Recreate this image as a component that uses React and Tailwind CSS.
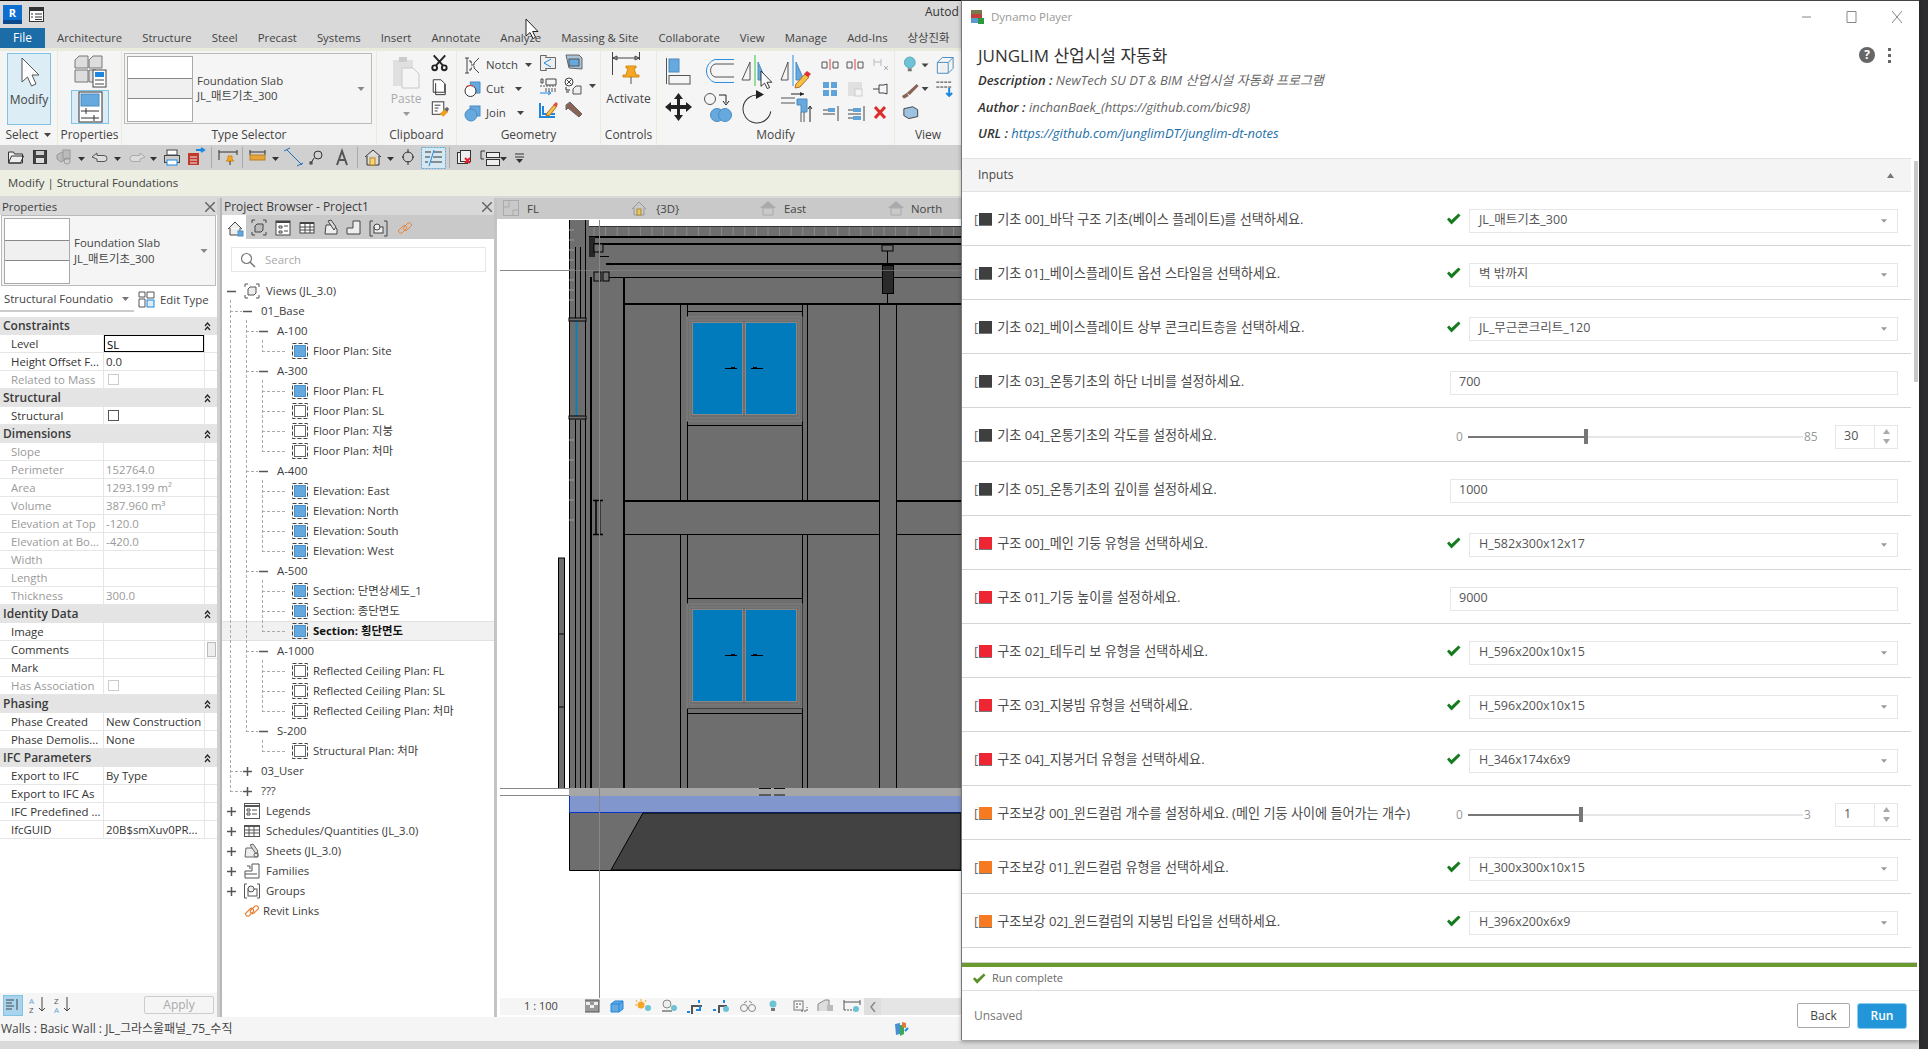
import React from "react";

const Caret = ({ c = "#444", s = 7 }) => (
  <svg width={s} height={4} viewBox="0 0 7 4" className="shrink-0"><path d="M0 0h7L3.5 4z" fill={c} /></svg>
);

/* ---------- ribbon drawings ---------- */
const Cursor = ({ x, y, s = 1 }) => (
  <path transform={`translate(${x} ${y}) scale(${s})`} d="M0 0v17l4-3.5 3 6 2.6-1.2-3-5.8H12z" fill="#fff" stroke="#222" strokeWidth="1" />
);

const PropsIcons = () => (
  <svg width="63" height="78" viewBox="58 51 63 78">
    <g fill="#ddd" stroke="#777">
      <path d="M75 60l4-4h9v12H75z" /><path d="M89 60l4-4h9v12H89z" />
      <path d="M75 70h13v12H75z" /><path d="M89 70h7v12h-7z" />
    </g>
    <rect x="93" y="70" width="13" height="17" fill="#fff" stroke="#444" />
    <rect x="95" y="72" width="9" height="5" fill="#1b87e0" />
    <path d="M95 80h9M95 84h9" stroke="#444" />
    <rect x="71.5" y="90.5" width="37" height="33" fill="#dcedf5" stroke="#7fc4e4" />
    <rect x="79" y="92" width="23" height="30" fill="#fff" stroke="#333" />
    <rect x="81" y="94" width="18" height="12" fill="#65a9de" stroke="#4c8cc0" />
    <path d="M81 111h18M81 118h18M86 108v6M94 115v6" stroke="#333" />
  </svg>
);

const ClipIcons = () => (
  <svg width="30" height="70" viewBox="429 54 30 70">
    <g transform="translate(434 57)" stroke="#222" strokeWidth="2" fill="none">
      <path d="M2 0l10 11M14 0L4 11" /><circle cx="3" cy="13" r="2.5" /><circle cx="13" cy="13" r="2.5" />
    </g>
    <path d="M435.5 82.5h8l4 4v9h-12z" fill="#fff" stroke="#333" />
    <path d="M438 86v12h10V87" fill="none" stroke="#333" />
    <rect x="434.5" y="105.5" width="12" height="13" fill="#fff" stroke="#333" />
    <path d="M437 109h6M437 112h4M437 115h3" stroke="#333" />
    <path d="M442 118l6-5 3 3-5 5z" fill="#f0a020" />
    <path d="M447 113l3-2 2 2-2 3z" fill="#666" />
  </svg>
);

const GeoSmall = ({ k }) => (
  <svg width="17" height="17" viewBox="0 0 17 17" className="shrink-0">
    {k === "n" && <g fill="none" stroke="#444"><path d="M1 1h4M3 1v15M1 16h4M5 4h2v2h1M5 13h2v-2h1" /><path d="M15 1l-5 5v2h-3M15 16l-5-5V9" /></g>}
    {k === "c" && <g><path d="M6 1h10v11H9z" fill="#65a9de" stroke="#4c8cc0" /><circle cx="6.5" cy="10" r="5.5" fill="#fff" stroke="#333" /><path d="M2 6a5.5 5.5 0 0 1 8 0" fill="none" stroke="#e0503a" /></g>}
    {k === "j" && <g><rect x="6" y="1" width="10" height="10" fill="#65a9de" stroke="#4c8cc0" /><circle cx="7" cy="10" r="6" fill="#65a9de" stroke="#4c8cc0" /></g>}
  </svg>
);

const GeoIcons = () => (
  <svg width="60" height="72" viewBox="538 54 60 72">
    <path d="M540.5 58.5h6l-1 2h10v11h-10l1 2h-6z" fill="#eee" stroke="#666" />
    <path d="M551 62l-7 4 7 4" fill="none" stroke="#1b87e0" />
    <path d="M566 58h13l3 3v11l-13-1z" fill="#a8c3d8" stroke="#666" />
    <rect x="569" y="62" width="10" height="7" fill="#65a9de" stroke="#555" />
    <path d="M541 82h2v4h-2zM546 82h10v6h-10z" fill="none" stroke="#444" />
    <path d="M540 89h16M545 92h11M545 94h11" stroke="#555" strokeDasharray="2 1" />
    <path d="M540 96h10M548 94l3 2-3 2" stroke="#1b87e0" fill="none" />
    <circle cx="569" cy="85" r="4" fill="#fff" stroke="#444" /><path d="M566.5 82.5l5 5M571.5 82.5l-5 5" stroke="#444" />
    <path d="M573 92l3-3h5v8h-8z" fill="#eee" stroke="#555" /><path d="M566 90v3h4M566 95h3" stroke="#333" fill="none" />
    <path d="M589 87h7l-3.500 4z" fill="#444" />
    <path d="M540 106v14h15M543 109v8h12" fill="none" stroke="#1b87e0" strokeWidth="2" />
    <path d="M547 116l8-9 2 2-7 9-4 1z" fill="#f5c242" stroke="#b46a2a" /><path d="M553 108l3-3 2 2-2 3z" fill="#e0503a" />
    <path d="M566 108l4-3 12 12-3 3-11-9-2 2z" fill="#8a6355" stroke="#666" />
  </svg>
);

const ActivateIcon = () => (
  <svg width="40" height="34" viewBox="610 55 40 34">
    <path d="M613.500 56v23M640.500 56v8M614 62h26M614 62l4-2v4zM640 62l-4-2v4z" stroke="#444" fill="none" />
    <path d="M634 70h10v2h-2l2 7h3v2h-16v-2h3l2-7h-2z" fill="#f5a623" stroke="#d68a10" transform="translate(-7 0)" />
    <path d="M632 81v7" stroke="#555" />
  </svg>
);

const ModifyIcons = () => (
  <svg width="237" height="78" viewBox="657 51 237 78">
    <g stroke="#555" fill="none">
      <path d="M666.500 58v26" /><rect x="669" y="59" width="10" height="13" fill="#65a9de" stroke="#4c8cc0" /><rect x="669" y="75.500" width="21" height="8.500" />
      <path d="M734 59.500h-19a12 12 0 0 0 0 23h19" stroke="#2a8fe0" /><path d="M734 64h-19a7 7 0 0 0 0 13h19" />
      <path d="M742 80l8-18v18z" /><path d="M755 55v31" stroke="#36c436" />
      <path d="M758 62v18h8z" fill="#65a9de" stroke="#4c8cc0" />
      <path d="M781 80l7-18v18z" /><path d="M793 55v31" stroke="#2a8fe0" />
      <path d="M796 62v18h8z" fill="#65a9de" stroke="#4c8cc0" />
    </g>
    <path d="M796 84l9-10 4 3-9 10-5 1z" fill="#f5c242" stroke="#b46a2a" /><path d="M804 74l3-3 4 3-3 3z" fill="#e0303a" />
    <path d="M678.500 93l4.500 6h-3v6h6v-3l6 5-6 5v-3h-6v6h3l-4.500 6-4.500-6h3v-6h-6v3l-6-5 6-5v3h6v-6h-3z" fill="#222" />
    <circle cx="710" cy="99" r="5.500" fill="none" stroke="#555" /><path d="M719 95h7v8M723 101l3 4 3-4" fill="none" stroke="#222" />
    <circle cx="717" cy="115" r="6.500" fill="#65a9de" stroke="#4c8cc0" /><circle cx="725" cy="115" r="6.500" fill="#65a9de" stroke="#4c8cc0" />
    <path d="M757 95a14 14 0 1 0 14 14" transform="rotate(10 757 109)" fill="none" stroke="#333" />
    <path d="M756 90l8 4.500-8 4.500z" fill="#222" />
    <path d="M781 98h14M781 103h14" stroke="#555" /><path d="M791 94h13" stroke="#222" /><path d="M800 92l4 2-4 2z" fill="#222" />
    <path d="M797 99h10v13h-6v-7h-4z" fill="#65a9de" stroke="#4c8cc0" /><path d="M801 112v10M804 112v10" stroke="#555" /><path d="M810 122v-15M808 109l2-3 2 3" stroke="#222" fill="none" />
    <g>
      <path d="M822 62h5v6h-5zM833 62h5v6h-5z" fill="none" stroke="#555" /><path d="M830 59v11" stroke="#e0403a" />
      <path d="M847 62h5v6h-5zM858 62h5v6h-5z" fill="none" stroke="#555" /><path d="M855 59v11" stroke="#e0403a" />
      <path d="M874 62h7M874 59v7M881 59v7" stroke="#bbb" fill="none" /><path d="M884 66l4 4M888 66l-4 4" stroke="#aaa" />
      <g fill="#5fa3d9"><rect x="823" y="82" width="6" height="6" /><rect x="831" y="82" width="6" height="6" /><rect x="823" y="90" width="6" height="6" /><rect x="831" y="90" width="6" height="6" /></g>
      <rect x="848" y="82" width="14" height="14" fill="#e0e0e0" /><rect x="855" y="89" width="7" height="7" fill="#f5f5f5" stroke="#ccc" />
      <path d="M873 89h6M879 85h5l3-1v10l-3-1h-5z" fill="none" stroke="#444" />
      <path d="M823 110h12M823 114h12M838 106v15" stroke="#444" /><path d="M828 108h7v4h-7z" fill="#5fa3d9" />
      <path d="M848 110h13M848 114h13M848 118h13M864 106v15" stroke="#444" /><path d="M853 108h8v4h-8zM853 116h8v4h-8z" fill="#5fa3d9" />
      <path d="M875 107l10 11M885 107l-10 11" stroke="#e02a2a" strokeWidth="3" />
    </g>
  </svg>
);

const ViewIcons = () => (
  <svg width="67" height="78" viewBox="895 51 67 78">
    <circle cx="910" cy="62" r="5.500" fill="#6cc3d5" stroke="#5ea8b8" /><rect x="908" y="68" width="4" height="3" fill="#777" />
    <path d="M922 63h7l-3.500 4z" fill="#444" />
    <path d="M938 62h11v11h-11zM938 62l5-5h11v11l-5 5M949 62l5-5" fill="none" stroke="#4a8ec4" />
    <rect x="941" y="64" width="6" height="7" fill="#eee" />
    <path d="M902 96l5-3 2 3-5 3zM907 93l10-9 2 2-9 9z" fill="#8a6355" /><path d="M922 87h7l-3.500 4z" fill="#444" />
    <path d="M937 82h15M937 87h15" stroke="#333" strokeDasharray="3 1" /><path d="M950 88v7M947 93l3 3 3-3" stroke="#1b87e0" fill="none" strokeWidth="2" />
    <path d="M904 109l9-2 5 3v7l-9 2-5-3z" fill="#9ec3e0" stroke="#444" />
  </svg>
);

const Qat = () => (
  <svg width="540" height="25" viewBox="0 145 540 25" className="block">
    <g fill="none" stroke="#333">
      <path d="M8.500 163v-11h5l1 2h8v9zM8.500 163l3-7h12l-3 7z" fill="#eee" />
      <rect x="33.500" y="150.500" width="13" height="13" fill="#444" /><rect x="36" y="151" width="8" height="4" fill="#ccc" stroke="none" /><rect x="36" y="158" width="8" height="5" fill="#ddd" stroke="none" />
      <g stroke="#999" fill="#bbb"><path d="M57 155l5-3 4 3v4l-5 3-4-3z" /><rect x="63" y="150" width="7" height="9" /><circle cx="67" cy="161" r="3" fill="none" /></g>
      <path d="M92 157l5-4v2.500h7a3 3 0 0 1 0 6h-7V159z" fill="#ddd" stroke="#555" />
      <path d="M145 157l-5-4v2.500h-7a3 3 0 0 0 0 6h7V159z" fill="#ddd" stroke="#aaa" />
      <rect x="164.500" y="155.500" width="15" height="7" fill="#ccc" stroke="#444" /><rect x="167" y="150" width="10" height="5" fill="#fff" stroke="#444" /><rect x="167" y="160" width="10" height="5" fill="#fff" stroke="#1b87e0" />
      <rect x="188" y="153" width="11" height="12" fill="#c0392b" stroke="none" /><path d="M190 157h7M190 160h7M190 163h7" stroke="#eee" /><path d="M196 150h6M201 148l3 2-3 2" stroke="#1b87e0" strokeWidth="2" />
      <path d="M219 150v10M237 150v5M219 152h18" stroke="#333" />
      <path d="M228 156h4v3l2 2h-8l2-2z" fill="#f5a623" stroke="#d68a10" /><path d="M230 161v4" />
      <path d="M250 150v5M265 150v5M250 152h15" /><rect x="250" y="155" width="15" height="5" fill="#e6a53a" stroke="#b98020" />
      <path d="M287 150l15 15M284 151l6-3M297 166l6-3" stroke="#1f6fb8" />
      <circle cx="318" cy="155" r="4" /><path d="M314 158l-3 5" /><rect x="310" y="162" width="2" height="2" />
      <path d="M337 165l5-14 5 14M339 160h6" stroke="#555" strokeWidth="2" />
      <path d="M365 157l8-7 8 7M367 156v9h12v-9" fill="#ddd" /><rect x="370" y="158" width="5" height="7" fill="#f5d76e" stroke="#b98020" />
      <circle cx="408" cy="157" r="5" /><path d="M408 149v4M408 161v4" /><path d="M402 157h2M412 157h2" />
      <rect x="421.500" y="147.500" width="24" height="21" fill="#d5e8f2" stroke="#5fa8d8" strokeDasharray="2 1" />
      <path d="M425 152h6M434 152h8M425 157h5M433 157h9M425 162h3M431 162h11" /><path d="M434 150l-5 16" stroke="#1b87e0" />
      <rect x="457.500" y="152.500" width="10" height="11" fill="#eee" /><rect x="460.500" y="150.500" width="10" height="11" fill="#eee" /><path d="M465 158l5 5M470 158l-5 5" stroke="#e0202a" strokeWidth="2" />
      <rect x="486.500" y="159.500" width="13" height="6" fill="#eee" /><rect x="486.500" y="152.500" width="13" height="5" fill="#eee" /><path d="M481 151h4M481 151v8M481 159h3" />
      <path d="M515 154h9M515 157h9" stroke="#333" />
    </g>
    <g fill="#333">
      <path d="M78 157h7l-3.500 4zM114 157h7l-3.500 4zM150 157h7l-3.500 4z" />
      <path d="M272 157h7l-3.500 4zM387 157h7l-3.500 4zM500 157h7l-3.500 4zM516 159h7l-3.500 4z" />
    </g>
    <path d="M211.500 147v21M242.500 147v21M357.500 147v21M449.500 147v21" stroke="#aaa" />
  </svg>
);

/* ---------- properties ---------- */
const rows = [
  ["s", "Constraints"],
  ["e", "Level", "SL"],
  ["r", "Height Offset F...", "0.0"],
  ["d", "Related to Mass", "☐"],
  ["s", "Structural"],
  ["r", "Structural", "☑"],
  ["s", "Dimensions"],
  ["d", "Slope", ""],
  ["d", "Perimeter", "152764.0"],
  ["d", "Area", "1293.199 m²"],
  ["d", "Volume", "387.960 m³"],
  ["d", "Elevation at Top", "-120.0"],
  ["d", "Elevation at Bo...", "-420.0"],
  ["d", "Width", ""],
  ["d", "Length", ""],
  ["d", "Thickness", "300.0"],
  ["s", "Identity Data"],
  ["r", "Image", ""],
  ["c", "Comments", ""],
  ["r", "Mark", ""],
  ["d", "Has Association", "☐"],
  ["s", "Phasing"],
  ["r", "Phase Created", "New Construction"],
  ["r", "Phase Demolis...", "None"],
  ["s", "IFC Parameters"],
  ["r", "Export to IFC", "By Type"],
  ["r", "Export to IFC As", ""],
  ["r", "IFC Predefined ...", ""],
  ["r", "IfcGUID", "20B$smXuv0PR..."],
];

const Thumb = () => (
  <div className="w-[66px] h-[66px] bg-white border border-[#aaa] flex flex-col justify-center shrink-0">
    <div className="h-[21px] bg-[#f0f0f0] border-y border-[#888]" />
  </div>
);

const Chev = () => (
  <svg width="7" height="9" viewBox="0 0 7 9"><path d="M1 4l2.500-3L6 4M1 8l2.500-3L6 8" fill="none" stroke="#222" strokeWidth="1.200" /></svg>
);

const PropRow = ({ r }) => {
  const [k, n, v] = r;
  if (k === "s")
    return (
      <div className="h-[18px] bg-[#e4e4e4] flex items-center justify-between pl-[3px] pr-[6px] font-semibold text-[12px] text-[#3a3a3a]">
        <span>{n}</span><Chev />
      </div>
    );
  const dis = k === "d";
  const isBox = v === "☐" || v === "☑";
  return (
    <div className={`h-[18px] flex border-b border-[#e6e6e6] text-[11.4px] leading-[17px] ${dis ? "text-[#9a9a9a]" : "text-[#333]"}`}>
      <div className="w-[103px] pl-[11px] whitespace-nowrap">{n}</div>
      <div className="w-[101px] border-l border-[#e6e6e6] pl-[2px] whitespace-nowrap relative flex items-center">
        {isBox && <span className={`ml-[2px] w-[11px] h-[11px] border ${dis ? "border-[#ccc]" : "border-[#555]"}`} />}
        {!isBox && k === "e" && <span className="w-[100px] h-[17px] -ml-[2px] pl-[2px] border border-black text-black bg-white">{v}</span>}
        {!isBox && k !== "e" && v}
      </div>
      <div className="flex-1 border-l border-[#e6e6e6] flex items-center justify-center">
        {k === "c" && <span className="w-[9px] h-[15px] bg-[#eee] border border-[#bbb]" />}
      </div>
    </div>
  );
};

/* ---------- project browser ---------- */
const tree = [
  ["0m", "Views (JL_3.0)", "views"],
  ["1m", "01_Base"],
  ["2m", "A-100"],
  ["l", "Floor Plan: Site", "b"],
  ["2m", "A-300"],
  ["l", "Floor Plan: FL", "b"],
  ["l", "Floor Plan: SL", "w"],
  ["l", "Floor Plan: 지붕", "w"],
  ["l", "Floor Plan: 처마", "w"],
  ["2m", "A-400"],
  ["l", "Elevation: East", "b"],
  ["l", "Elevation: North", "b"],
  ["l", "Elevation: South", "b"],
  ["l", "Elevation: West", "b"],
  ["2m", "A-500"],
  ["l", "Section: 단면상세도_1", "b"],
  ["l", "Section: 종단면도", "b"],
  ["L", "Section: 횡단면도", "b"],
  ["2m", "A-1000"],
  ["l", "Reflected Ceiling Plan: FL", "w"],
  ["l", "Reflected Ceiling Plan: SL", "w"],
  ["l", "Reflected Ceiling Plan: 처마", "w"],
  ["2m", "S-200"],
  ["l", "Structural Plan: 처마", "w"],
  ["1p", "03_User"],
  ["1p", "???"],
  ["0p", "Legends", "legend"],
  ["0p", "Schedules/Quantities (JL_3.0)", "sched"],
  ["0p", "Sheets (JL_3.0)", "sheet"],
  ["0p", "Families", "fam"],
  ["0p", "Groups", "group"],
  ["0n", "Revit Links", "link"],
];

const Tog = ({ plus }) => (
  <svg width="9" height="9" viewBox="0 0 9 9" className="shrink-0">
    <path d={plus ? "M0 4.500h9M4.500 0v9" : "M0 4.500h9"} stroke="#555" strokeWidth="1.500" />
  </svg>
);

const ViewBox = ({ c }) => (
  <svg width="16" height="16" viewBox="0 0 16 16" className="shrink-0">
    <rect x="0.500" y="0.500" width="15" height="15" fill="none" stroke="#444" strokeDasharray="4 2" />
    <rect x="2.500" y="2.500" width="11" height="11" fill={c === "b" ? "#63a9e0" : "#fff"} stroke={c === "b" ? "#4f90c4" : "#666"} />
  </svg>
);

const TreeIcon = ({ k }) => (
  <svg width="16" height="16" viewBox="0 0 16 16" className="shrink-0">
    {k === "views" && <g fill="none" stroke="#555"><path d="M1 4V1h3M12 1h3v3M15 12v3h-3M4 15H1v-3" /><path d="M4 6l2-2h6v6l-2 2H4z" fill="#eee" /></g>}
    {k === "legend" && <g fill="none" stroke="#555"><rect x="0.500" y="0.500" width="15" height="15" fill="#fff" /><path d="M0 3h16" strokeWidth="2" /><path d="M3 6h3v2H3zM3 10h3v2H3zM8 7h5M8 11h5" /></g>}
    {k === "sched" && <g fill="none" stroke="#555"><rect x="0.500" y="2.500" width="15" height="11" /><path d="M0 3h16" strokeWidth="2" /><path d="M1 7h14M1 10h14M5 3v10M10 3v10" /></g>}
    {k === "sheet" && <g fill="none" stroke="#666"><path d="M1 14l1-9h7l5 5v4z" fill="#eee" /><path d="M6 2l3-1 5 7-2 3z" fill="#ddd" /><circle cx="12" cy="12" r="2" /></g>}
    {k === "fam" && <g fill="none" stroke="#555"><path d="M1 8h7V1h7v14H1z" /><path d="M3 3h3v3M1 11h12" /></g>}
    {k === "group" && <g fill="none" stroke="#555"><path d="M3 1H0.500v14H3M13 1h2.500v14H13" /><rect x="4" y="6" width="9" height="7" /><circle cx="7" cy="6" r="3" fill="#eee" /></g>}
    {k === "link" && <g fill="none" stroke="#e5853a" strokeWidth="1.200"><path d="M1 11l5-5a2 2 0 0 1 3 3l-4 4a2.500 2.500 0 0 1-3.500-2" /><path d="M15 5l-5 5a2 2 0 0 1-3-3l4-4a2.500 2.500 0 0 1 3.500 2" /></g>}
  </svg>
);

const TreeRow = ({ t }) => {
  const [k, label, ic] = t;
  if (k === "l" || k === "L")
    return (
      <div className={`h-5 flex items-center pl-[70px] ${k === "L" ? "bg-[#f1f1f1] border-y border-[#e2e2e2] font-bold text-[#111]" : ""}`}>
        <ViewBox c={ic} /><span className="ml-[5px]">{label}</span>
      </div>
    );
  if (k === "1m" || k === "1p")
    return <div className="h-5 flex items-center pl-[21px]"><Tog plus={k === "1p"} /><span className="ml-[9px]">{label}</span></div>;
  if (k === "2m")
    return <div className="h-5 flex items-center pl-[37px]"><Tog /><span className="ml-[9px]">{label}</span></div>;
  if (k === "0n")
    return <div className="h-5 flex items-center pl-[22px]"><TreeIcon k={ic} /><span className="ml-[3px]">{label}</span></div>;
  return (
    <div className="h-5 flex items-center pl-[5px]">
      <Tog plus={k === "0p"} /><span className="w-[8px]" /><TreeIcon k={ic} /><span className="ml-[6px]">{label}</span>
    </div>
  );
};

const TreeLines = () => {
  const v = [[231, 300, 791], [247, 320, 731], [263, 340, 351], [263, 380, 451], [263, 480, 551], [263, 580, 631], [263, 660, 711], [263, 740, 751]];
  const h = [[231, 243, [311, 771, 791]], [247, 259, [331, 371, 471, 571, 651, 731]], [263, 288, [351, 391, 411, 431, 451, 491, 511, 531, 551, 591, 611, 631, 671, 691, 711, 751]]];
  return (
    <svg className="absolute left-0 top-0 pointer-events-none" width="271" height="640" viewBox="223 281 271 640">
      <g stroke="#aaa" strokeDasharray="3 2" fill="none">
        {v.map(([x, a, b], i) => <path key={i} d={`M${x + 0.5} ${a}V${b + 0.5}`} />)}
        {h.map(([a, b, ys], i) => ys.map((y) => <path key={`${i}-${y}`} d={`M${a} ${y + 0.5}H${b}`} />))}
      </g>
    </svg>
  );
};

const BrowserTools = () => (
  <svg width="271" height="24" viewBox="223 215 271 24" className="block">
    <rect x="223" y="215" width="24" height="24" fill="#fff" />
    <g fill="none" stroke="#444">
      <path d="M229 229l7-7 7 7M231 228v7h10v-7" fill="#eee" />
      <rect x="239" y="231" width="5" height="5" fill="#63a9e0" stroke="#4f90c4" />
      <path d="M253 223v-3h3M264 220h3v3M267 232v3h-3M256 235h-3v-3" /><path d="M256 226l2-2h6v6l-2 2h-6z" fill="#bbb" />
      <rect x="277" y="221" width="14" height="14" fill="#fff" /><path d="M277 222h14" strokeWidth="2" /><path d="M280 226h3v2h-3zM280 231h3v2h-3zM285 226h4M285 231h4" />
      <rect x="301" y="223" width="14" height="10" fill="#fff" /><path d="M301 223h14" strokeWidth="2" /><path d="M301 227h14M301 230h14M306 223v10M311 223v10" />
      <path d="M326 234l1-9h7l4 4v5z" fill="#eee" /><path d="M329 221l3-1 5 7-2 3z" fill="#ddd" />
      <path d="M348 228h6v-7h7v13h-13z" fill="#eee" />
      <path d="M374 221h-3v15h3M385 221h3v15h-3" /><rect x="375" y="227" width="9" height="6" fill="#eee" /><circle cx="378" cy="227" r="3" fill="#eee" />
    </g>
    <g fill="none" stroke="#e5853a"><path d="M399 231l5-5a2 2 0 0 1 3 3l-4 4a2.500 2.500 0 0 1-3.500-2" /><path d="M413 225l-5 5a2 2 0 0 1-3-3l4-4a2.500 2.500 0 0 1 3.500 2" /></g>
  </svg>
);

/* ---------- canvas ---------- */
const Win = ({ y }) => (
  <g>
    <rect x="687" y={y} width="115" height="104" fill="#6e6e6e" stroke="#7f7f7f" />
    <rect x="690" y={y + 3} width="109" height="98" fill="none" stroke="#7f7f7f" />
    <rect x="692.500" y={y + 5.500} width="50" height="92" fill="#027bbd" stroke="#888" />
    <rect x="745.500" y={y + 5.500} width="51" height="92" fill="#027bbd" stroke="#888" />
    <path d={`M725 ${y + 51.500}h12M751 ${y + 51.500}h12`} stroke="#000" />
    <path d={`M731 ${y + 50.500}h4M753 ${y + 50.500}h4`} stroke="#000" />
  </g>
);

const Model = () => {
  const ticks = [];
  for (let x = 594; x < 961; x += 11.600) ticks.push(x);
  return (
    <svg width="464" height="779" viewBox="497 219 464 779" className="block shrink-0">
      <rect x="497" y="219" width="464" height="779" fill="#fff" />
      <rect x="569" y="220" width="20" height="568" fill="#6e6e6e" />
      <rect x="589" y="226" width="372" height="562" fill="#6e6e6e" />
      <rect x="558" y="558" width="7" height="230" fill="#6e6e6e" />
      <rect x="575.500" y="320" width="2" height="96" fill="#0a80b8" />
      <g stroke="#000" fill="none">
        <path d="M558.500 558v230M564.500 558v230M558 558h7M558 634h7M558 707h7" />
        <path d="M569.500 220v650M575.500 247v73M575.500 420v368M580.500 247v73M580.500 420v368M585.500 220v568" />
        <path d="M591 277v511" strokeWidth="2" /><path d="M624 278v510" strokeWidth="2" />
        <path d="M589 226.500h372" stroke="#333" />
        <path d="M589 237h372M589 244h372M606 264h355" strokeWidth="2" />
        <path d="M606 277.500h355M599 256.500h10" />
        <path d="M624 304h337M624 501h255M896 501h65" strokeWidth="2" />
        <path d="M624 534.500h255M896 534.500h65" />
        <path d="M680.500 304v197M687.500 304v197M802.500 304v197M807.500 304v197M680.500 534v254M687.500 534v254M802.500 534v254M807.500 534v254" />
        <path d="M879.500 304v484M896.500 304v484" />
        <path d="M687 311.500h115M687 425.500h115M687 598.500h115M687 708.500h115M687 713.500h115" />
        <path d="M887.500 250v54" />
      </g>
      <g stroke="#8a8a8a" fill="none">{ticks.map((x) => <path key={x} d={`M${x} 227v9`} />)}</g>
      <path d="M569 230h5M569 240h5M569 250h5M569 260h5M569 270h5M569 280h5M569 290h5M569 300h5M569 440h5M569 460h5M569 480h5M569 500h5M569 520h5" stroke="#9a9a9a" />
      <Win y={317} /><Win y={604} />
      <rect x="569" y="318" width="17" height="3" fill="#6e6e6e" stroke="#000" />
      <rect x="569" y="416" width="17" height="3" fill="#6e6e6e" stroke="#000" />
      <rect x="589" y="237" width="6" height="20" fill="#262626" />
      <rect x="594" y="244" width="9" height="8" fill="#6e6e6e" stroke="#000" />
      <rect x="594" y="272" width="7" height="9" fill="#6e6e6e" stroke="#000" />
      <rect x="603" y="272" width="6" height="9" fill="#6e6e6e" stroke="#000" />
      <rect x="882" y="245" width="11" height="6" fill="#6e6e6e" stroke="#000" />
      <rect x="882.500" y="265.500" width="11" height="28" fill="#2a2a2a" stroke="#000" />
      <path d="M593 500.500h10M593 534.500h10M596 501v33" stroke="#000" strokeWidth="1.500" />
      <path d="M600 501v33" stroke="#000" />
      <path d="M500 270.500h69" stroke="#888" /><path d="M569 270.500h392" stroke="#888" opacity="0.600" />
      <rect x="569" y="788" width="392" height="8" fill="#a6a6a6" />
      <rect x="569" y="796" width="392" height="16" fill="#8096cc" />
      <path d="M569 812.500h392M569.500 796v17" stroke="#0a36c8" />
      <path d="M759 788.500h12M774 788.500h11M759 795h12M774 795h11" stroke="#111" />
      <rect x="569" y="813" width="392" height="57" fill="#6e6e6e" />
      <path d="M643 813L611 870H961V813z" fill="#424242" stroke="#000" />
      <path d="M569.500 813v57.500H961" stroke="#000" fill="none" />
      <path d="M500 788.500h69M500 795.500h69" stroke="#888" />
      <path d="M599.500 220v778" stroke="#888" />
    </svg>
  );
};

const TabIcon = ({ k }) => (
  <svg width="16" height="16" viewBox="0 0 16 16" className="shrink-0">
    {k === "p" && <g fill="none" stroke="#aaa"><rect x="0.500" y="0.500" width="15" height="15" /><path d="M6 1v6h-5M10 15v-5h5" /></g>}
    {k === "h" && <g fill="none" stroke="#999"><path d="M1 9l7-7 7 7M3 8v7h10V8" /><rect x="6" y="9" width="4" height="6" fill="#e8c860" stroke="#b08a30" /></g>}
    {k === "e" && <g><path d="M0 8l8-7 8 7z" fill="#aaa" /><path d="M3 8h10v7H3z" fill="none" stroke="#aaa" /></g>}
  </svg>
);

const VBar = () => {
  const b = "#6cc3d5";
  return (
    <svg width="279" height="17" viewBox="585 998 279 17" className="block shrink-0">
      <rect x="583" y="1000" width="16" height="12" fill="#999" stroke="#555" />
      <g fill="#eee"><rect x="586" y="1002" width="4" height="3" /><rect x="594" y="1002" width="4" height="3" /><rect x="590" y="1005" width="4" height="3" /></g>
      <path d="M611 1004l4-3h8v8l-4 3h-8z" fill="#65a9de" stroke="#1b87e0" /><path d="M611 1004h8v8M619 1004l4-3" fill="none" stroke="#1b87e0" />
      <circle cx="641" cy="1005" r="3.500" fill="#f5a623" /><path d="M641 999v2M636 1000l1 2M646 1000l-1 2M635 1005h2" stroke="#f5a623" />
      <circle cx="648" cy="1008" r="3" fill={b} />
      <circle cx="667" cy="1004" r="4" fill="#eee" stroke="#888" /><path d="M662 1011h10" stroke="#999" strokeWidth="2" /><circle cx="674" cy="1008" r="3" fill={b} />
      <path d="M692 1014v-8h10" stroke="#555" strokeWidth="2" fill="none" /><path d="M687 1012h3M696 1010h4v-4M699 1000v3" stroke="#1b87e0" strokeWidth="2" fill="none" />
      <path d="M719 1013v-7h8" stroke="#555" strokeWidth="2" fill="none" /><path d="M713 1010h3M724 1000v3" stroke="#1b87e0" strokeWidth="2" /><circle cx="726" cy="1009" r="3" fill={b} />
      <circle cx="744" cy="1008" r="3.500" fill="none" stroke="#888" /><circle cx="752" cy="1008" r="3.500" fill="none" stroke="#888" /><path d="M744 1003l3-2M752 1003l-3-2" stroke="#888" />
      <circle cx="773" cy="1004" r="3.500" fill={b} /><rect x="771" y="1008" width="4" height="3" fill="#777" />
      <rect x="794" y="1001" width="9" height="9" fill="none" stroke="#777" /><path d="M796 1004h5M796 1007h3M801 1011h6M807 1011v-4" stroke="#555" fill="none" strokeDasharray="2 1" />
      <path d="M818 1011v-7l7-4h4v11" fill="#ddd" stroke="#888" /><rect x="827" y="1005" width="6" height="6" fill="#bbb" />
      <path d="M844 1000v10M860 1000v5M844 1002h16" stroke="#555" fill="none" /><path d="M844 1010h12" stroke="#555" strokeDasharray="2 1" /><circle cx="856" cy="1009" r="3" fill={b} />
    </svg>
  );
};

/* ---------- dynamo ---------- */
const inputs = [
  ["d", "기초 00]_바닥 구조 기초(베이스 플레이트)를 선택하세요.", "s", "JL_매트기초_300"],
  ["d", "기초 01]_베이스플레이트 옵션 스타일을 선택하세요.", "s", "벽 밖까지"],
  ["d", "기초 02]_베이스플레이트 상부 콘크리트층을 선택하세요.", "s", "JL_무근콘크리트_120"],
  ["d", "기초 03]_온통기초의 하단 너비를 설정하세요.", "t", "700"],
  ["d", "기초 04]_온통기초의 각도를 설정하세요.", "r", "30", "85", 34.5],
  ["d", "기초 05]_온통기초의 깊이를 설정하세요.", "t", "1000"],
  ["r", "구조 00]_메인 기둥 유형을 선택하세요.", "s", "H_582x300x12x17"],
  ["r", "구조 01]_기둥 높이를 설정하세요.", "t", "9000"],
  ["r", "구조 02]_테두리 보 유형을 선택하세요.", "s", "H_596x200x10x15"],
  ["r", "구조 03]_지붕빔 유형을 선택하세요.", "s", "H_596x200x10x15"],
  ["r", "구조 04]_지붕거더 유형을 선택하세요.", "s", "H_346x174x6x9"],
  ["o", "구조보강 00]_윈드컬럼 개수를 설정하세요. (메인 기둥 사이에 들어가는 개수)", "r", "1", "3", 33],
  ["o", "구조보강 01]_윈드컬럼 유형을 선택하세요.", "s", "H_300x300x10x15"],
  ["o", "구조보강 02]_윈드컬럼의 지붕빔 타입을 선택하세요.", "s", "H_396x200x6x9"],
];

const Check = ({ c = "#167a1e", s = 15 }) => (
  <svg width={s} height={s * 0.8} viewBox="0 0 15 12" className="shrink-0"><path d="M1 6.500l2-2 2.500 2.500L12.500 0.500 14.500 2.500 5.500 11.500z" fill={c} /></svg>
);

const Field = ({ v, w }) => (
  <div className={`h-[24px] bg-white border border-[#e6e6e6] flex items-center ${w}`}>{v}</div>
);

const InputRow = ({ r }) => {
  const [col, label, type, v, max, pct] = r;
  const sw = col === "d" ? "bg-[#3f3f3f]" : col === "r" ? "bg-[#ee2533]" : "bg-[#f57a21]";
  return (
    <div className="h-[54px] flex items-center border-b border-[#d4d4d4] pl-[12px] pr-[13px] text-[#4a4a4a]">
      <div className="flex items-center mt-[2px] text-[13.1px]">
        <span className="text-[#666]">[</span>
        <span className={`ml-[1px] w-[13px] h-[13px] border-b border-[#777] ${sw}`} />
        <span className="ml-[5px] whitespace-nowrap">{label}</span>
      </div>
      <div className="ml-auto mt-[4px] w-[448px] flex items-center shrink-0 text-[#555] text-[12.5px]">
        {type === "s" && (
          <>
            <div className="w-[23px] -ml-[4px] flex -mt-[4px]"><Check /></div>
            <Field w="flex-1 pl-[9px] pr-[10px] justify-between" v={<><span>{v}</span><Caret c="#999" s={6} /></>} />
          </>
        )}
        {type === "t" && <Field w="flex-1 pl-[8px]" v={<span>{v}</span>} />}
        {type === "r" && (
          <>
            <span className="w-[18px] pl-[6px] text-[#999] text-[12px]">0</span>
            <div className="flex-1 h-[2px] bg-[#e6e6e6] relative flex items-center">
              <div className="h-[2px] bg-[#777]" style={{ width: `${pct}%` }} />
              <div className="w-[4px] h-[15px] bg-[#777]" />
            </div>
            <span className="w-[32px] pl-[1px] text-[#999] text-[12px]">{max}</span>
            <div className="w-[63px] h-[24px] border border-[#e6e6e6] flex items-center">
              <span className="flex-1 pl-[8px]">{v}</span>
              <div className="w-[23px] h-full border-l border-[#e6e6e6] flex flex-col items-center justify-center gap-[5px]">
                <svg width="7" height="5" viewBox="0 0 7 5"><path d="M0 5h7L3.500 0z" fill="#aaa" /></svg>
                <svg width="7" height="5" viewBox="0 0 7 5"><path d="M0 0h7L3.500 5z" fill="#aaa" /></svg>
              </div>
            </div>
          </>
        )}
      </div>
    </div>
  );
};

const Group = ({ w, label, children }) => (
  <div className={`flex flex-col h-full border-r border-[#e9ecdc] shrink-0 ${w}`}>
    <div className="h-[76px] flex">{children}</div>
    <div className="h-[15px] text-center text-[12px] leading-[15px] text-[#444]">{label}</div>
  </div>
);

const GeoRow = ({ k, t, w }) => (
  <div className="h-[24px] flex items-center text-[11.4px] text-[#444]">
    <GeoSmall k={k} />
    <span className="ml-[5px]">{t}</span>
    <span className={`flex ${w}`}><Caret /></span>
  </div>
);

export default function App() {
  const tabs = ["Architecture", "Structure", "Steel", "Precast", "Systems", "Insert", "Annotate", "Analyze", "Massing & Site", "Collaborate", "View", "Manage", "Add-Ins", "상상진화"];
  return (
    <div className="w-[1928px] h-[1049px] flex relative overflow-hidden bg-[#2d2d30] font-['Open_Sans','Noto_Sans_CJK_KR',sans-serif] text-[12px] text-[#3c3c3c]">
      {/* Revit window */}
      <div className="w-[961px] h-full flex flex-col bg-[#d9d9d9] shrink-0 overflow-hidden relative">
        <div className="h-[28px] border-t border-black flex items-center pl-[3px] shrink-0 relative">
          <div className="w-[19px] h-[19px] bg-[#0f6fd0] text-white text-[11px] font-bold flex items-center justify-center border-b-[4px] border-[#0b4a8c] leading-none">R</div>
          <svg width="15" height="15" viewBox="0 0 15 15" className="ml-[7px]">
            <rect x="0.500" y="0.500" width="14" height="14" fill="#fff" stroke="#333" /><path d="M0 2.500h15" stroke="#333" strokeWidth="3" /><path d="M2 7h2M6 7h7M2 10h2M6 10h7M6 12.500h7" stroke="#333" />
          </svg>
          <span className="absolute left-[925px] top-[2px] text-[12px] text-[#333] whitespace-nowrap">Autod</span>
        </div>
        <div className="h-[20px] flex items-center gap-[20px] shrink-0 whitespace-nowrap text-[11.4px] text-[#444]">
          <div className="w-[45px] h-full shrink-0 bg-[#1c6ca8] text-white text-[12px] flex items-center justify-center -mr-[8px]">File</div>
          {tabs.map((t) => <span key={t} className="shrink-0">{t}</span>)}
        </div>
        <div className="h-[97px] shrink-0 border-t-[3px] border-[#e9ecdc] bg-[#f5f5f5] flex">
          <Group w="w-[58px]" label={<span className="flex items-center justify-center gap-[5px] pr-[2px] pl-[1px]">Select <Caret /></span>}>
            <div className="ml-[7px] mt-[2px] w-[44px] h-[72px] bg-[#dcedf5] border border-[#7fc4e4] flex flex-col items-center">
              <svg width="22" height="34" viewBox="0 0 22 34" className="mt-[3px]"><path d="M4 1v24l5.500-5 4 9 4.500-2-4-9h7z" fill="#fff" stroke="#555" /></svg>
              <span className="text-[12px] leading-[16px] text-[#444] mt-[1px]">Modify</span>
            </div>
          </Group>
          <Group w="w-[64px]" label="Properties"><PropsIcons /></Group>
          <Group w="w-[255px]" label="Type Selector">
            <div className="ml-[2px] mt-[2px] w-[248px] h-[71px] border border-[#bbb] flex items-center pl-[2px] pr-[6px]">
              <Thumb />
              <div className="ml-[4px] -mt-[2px] flex-1 leading-[15px] text-[11.4px] text-[#444] whitespace-nowrap">Foundation Slab<br />JL_매트기초_300</div>
              <Caret c="#888" s={8} />
            </div>
          </Group>
          <Group w="w-[80px]" label="Clipboard">
            <div className="w-[52px] flex flex-col items-center pl-[8px]">
              <svg width="28" height="33" viewBox="0 0 28 33" className="mt-[5px]">
                <path d="M1 4h20v26H1z" fill="#e0e0e0" /><rect x="7" y="1" width="8" height="5" fill="#ccc" /><path d="M10 12h11l6 6v14H10z" fill="#f5f5f5" stroke="#c8c8c8" />
              </svg>
              <span className="text-[#aaa] mt-[2px] leading-[15px]">Paste</span>
              <span className="mt-[6px] flex"><Caret c="#999" /></span>
            </div>
            <ClipIcons />
          </Group>
          <Group w="w-[144px]" label="Geometry">
            <div className="w-[81px] pl-[7px] pt-[2px] shrink-0">
              <GeoRow k="n" t="Notch" w="ml-[7px]" />
              <GeoRow k="c" t="Cut" w="ml-[11px]" />
              <GeoRow k="j" t="Join" w="ml-[11px]" />
            </div>
            <GeoIcons />
          </Group>
          <Group w="w-[56px]" label="Controls">
            <div className="flex flex-col items-center w-full">
              <ActivateIcon />
              <span className="text-[#444] mt-[6px] leading-[15px]">Activate</span>
            </div>
          </Group>
          <Group w="w-[238px]" label="Modify"><ModifyIcons /></Group>
          <Group w="w-[67px]" label="View"><ViewIcons /></Group>
        </div>
        <div className="h-[25px] shrink-0 bg-[#d0d0d0]"><Qat /></div>
        <div className="h-[26px] shrink-0 bg-[#ecefe2] flex items-center pl-[8px] text-[11.4px] text-[#444] whitespace-nowrap">Modify | Structural Foundations</div>

        <div className="h-[821px] shrink-0 flex pt-[2px] bg-[#d9d9d9]">
          {/* Properties */}
          <div className="w-[217px] shrink-0 flex flex-col bg-white">
            <div className="h-[17px] bg-[#d9d9d9] flex items-center justify-between pl-[2px] pr-[2px] text-[11.4px]">
              <span>Properties</span>
              <svg width="10" height="10" viewBox="0 0 10 10"><path d="M0 0l10 10M10 0L0 10" stroke="#666" strokeWidth="1.500" /></svg>
            </div>
            <div className="h-[71px] bg-[#f5f5f5] border border-[#bbb] mx-[1px] flex items-center pl-[2px] pr-[7px]">
              <Thumb />
              <div className="ml-[4px] flex-1 leading-[16px] text-[11.4px] text-[#444] whitespace-nowrap">Foundation Slab<br />JL_매트기초_300</div>
              <Caret c="#888" s={8} />
            </div>
            <div className="h-[31px] flex items-start pt-[2px] shrink-0 text-[11.4px]">
              <div className="w-[134px] h-[24px] border-b-2 border-[#ccc] flex items-center pl-[4px] text-[#444] whitespace-nowrap">
                <span className="w-[118px] shrink-0">Structural Foundatio</span><Caret c="#777" />
              </div>
              <svg width="17" height="17" viewBox="0 0 17 17" className="ml-[4px] mt-[3px]">
                <path d="M1 1h6v5H1zM1 8h6v8H1zM9 1h7v6H9z" fill="#fff" stroke="#555" /><rect x="9" y="9" width="7" height="7" fill="#d9ecf8" stroke="#1b87e0" />
              </svg>
              <span className="ml-[5px] mt-[3px] text-[#444] whitespace-nowrap">Edit Type</span>
            </div>
            {rows.map((r, i) => <PropRow key={i} r={r} />)}
            <div className="flex-1" />
            <div className="h-[24px] bg-[#f5f5f5] flex items-center pl-[3px] gap-[5px] shrink-0">
              <div className="w-[20px] h-[21px] bg-[#a8d4ee] border border-[#7fc4e4] flex items-center justify-center">
                <svg width="14" height="14" viewBox="0 0 14 14"><path d="M0 2h8M0 5h6M0 8h8M0 11h6M11 1v11" stroke="#444" fill="none" /></svg>
              </div>
              <svg width="20" height="20" viewBox="0 0 20 20"><text x="1" y="9" fontSize="8" fill="#5fa3d9">A</text><text x="1" y="18" fontSize="8" fill="#555">Z</text><path d="M14 2v14M11 13l3 3 3-3" stroke="#444" fill="none" /></svg>
              <svg width="20" height="20" viewBox="0 0 20 20"><text x="1" y="9" fontSize="8" fill="#555">Z</text><text x="1" y="18" fontSize="8" fill="#5fa3d9">A</text><path d="M14 2v14M11 13l3 3 3-3" stroke="#444" fill="none" /></svg>
              <div className="ml-auto mr-[3px] w-[70px] h-[18px] rounded-[2px] border border-[#ccc] flex items-center justify-center text-[#aaa]">Apply</div>
            </div>
          </div>
          <div className="w-[5px] shrink-0 bg-[#d0d0d0] border-r-[2px] border-[#b8b8b8]" />
          {/* Browser */}
          <div className="w-[272px] shrink-0 flex flex-col bg-white">
            <div className="h-[17px] bg-[#d9d9d9] flex items-center justify-between pl-[2px] pr-[2px]">
              <span className="whitespace-nowrap">Project Browser - Project1</span>
              <svg width="10" height="10" viewBox="0 0 10 10"><path d="M0 0l10 10M10 0L0 10" stroke="#666" strokeWidth="1.500" /></svg>
            </div>
            <div className="h-[24px] bg-[#c9c9c9]"><BrowserTools /></div>
            <div className="h-[42px] pt-[8px] pl-[9px] pr-[8px] shrink-0">
              <div className="h-[25px] border border-[#e6e6e6] flex items-center pl-[8px] text-[#aaa] text-[11.4px]">
                <svg width="16" height="16" viewBox="0 0 16 16"><circle cx="6.500" cy="6.500" r="5" fill="none" stroke="#777" strokeWidth="1.200" /><path d="M10 10l5 5" stroke="#777" strokeWidth="1.500" /></svg>
                <span className="ml-[9px]">Search</span>
              </div>
            </div>
            <div className="relative flex-1 whitespace-nowrap text-[11.4px] text-[#3c3c3c]">
              {tree.map((t, i) => <TreeRow key={i} t={t} />)}
              <TreeLines />
            </div>
          </div>
          <div className="w-[3px] shrink-0 bg-[#c4c4c4]" />
          {/* Canvas */}
          <div className="flex-1 min-w-0 flex flex-col bg-white relative">
            <div className="h-[21px] bg-[#c9c9c9] flex items-center text-[#444] text-[11.4px] shrink-0">
              <div className="w-[128px] flex items-center pl-[6px] gap-[8px]"><TabIcon k="p" /><span>FL</span></div>
              <div className="w-[129px] flex items-center pl-[6px] gap-[9px]"><TabIcon k="h" /><span>{"{3D}"}</span></div>
              <div className="w-[128px] flex items-center pl-[6px] gap-[8px]"><TabIcon k="e" /><span>East</span></div>
              <div className="flex items-center pl-[6px] gap-[7px]"><TabIcon k="e" /><span>North</span></div>
            </div>
            <Model />
            <div className="h-[17px] ml-[3px] bg-[#f5f5f5] flex items-center shrink-0">
              <span className="w-[85px] shrink-0 pl-[24px] text-[11px] text-[#444]">1 : 100</span>
              <VBar />
              <div className="w-[17px] h-full bg-[#dedede] flex items-center justify-center shrink-0">
                <svg width="6" height="10" viewBox="0 0 6 10"><path d="M5 0L1 5l4 5" fill="none" stroke="#888" strokeWidth="1.500" /></svg>
              </div>
              <div className="flex-1 h-full bg-[#e5e5e5]" />
            </div>
            <div className="flex-1 bg-white" />
          </div>
        </div>
        <div className="h-[24px] shrink-0 bg-[#f5f5f5] flex items-center justify-between pl-[1px] pr-[52px] text-[#444] whitespace-nowrap">
          <span>Walls : Basic Wall : JL_그라스울패널_75_수직</span>
          <svg width="16" height="16" viewBox="0 0 16 16"><path d="M2 3l5-1v11l-4 1z" fill="#4a90d0" /><path d="M7 4h4v9l-4 2z" fill="#3aa856" /><path d="M9 1l4 1v5l-4-1z" fill="#e07a3a" /><path d="M12 10l3-3" stroke="#1b87e0" strokeWidth="2" /></svg>
        </div>
        <div className="flex-1 bg-[#d9d9d9]" />
        {/* mouse pointers above the ribbon */}
        <svg className="absolute left-[524px] top-[18px]" width="16" height="22" viewBox="0 0 16 22"><Cursor x={2} y={1} /></svg>
        <svg className="absolute left-[760px] top-[70px]" width="14" height="20" viewBox="0 0 14 20"><Cursor x={1} y={1} s={0.9} /></svg>
      </div>

      {/* Dynamo Player window */}
      <div className="w-[958px] h-full shrink-0 flex flex-col">
        <div className="h-[1040px] bg-white border-l border-[#777] border-t border-t-[#444] flex flex-col relative shadow-[0_2px_4px_rgba(0,0,0,0.3)]">
          <div className="h-[32px] flex items-center pl-[8px] pr-[17px] shrink-0">
            <svg width="16" height="16" viewBox="0 0 16 16" className="shrink-0"><rect x="1" y="1" width="11" height="4" fill="#7a7a50" /><rect x="1" y="5" width="11" height="4" fill="#c0403a" /><rect x="1" y="9" width="7" height="5" fill="#5a9ad0" /><rect x="8" y="9" width="6" height="6" fill="#2a9a40" /></svg>
            <span className="ml-[5px] text-[11.5px] text-[#999]">Dynamo Player</span>
            <svg width="102" height="14" viewBox="-2 0 102 14" className="ml-auto"><path d="M0 7h9M45 1.500h9v11h-9z" stroke="#888" fill="none" /><path d="M90 1l10 12M100 1L90 13" stroke="#888" /></svg>
          </div>
          <div className="h-[125px] shrink-0 px-[16px] pt-[11px] relative">
            <div className="text-[17px] leading-[24px] text-[#333] font-normal whitespace-nowrap">JUNGLIM 산업시설 자동화</div>
            <div className="-mt-[1px] text-[13px] italic leading-[26.5px] text-[#666] whitespace-nowrap"><b className="font-semibold text-[#333]">Description : </b>NewTech SU DT &amp; BIM 산업시설 자동화 프로그램</div>
            <div className="text-[13px] italic leading-[26.5px] text-[#666] whitespace-nowrap"><b className="font-semibold text-[#333]">Author : </b>inchanBaek_(https://github.com/bic98)</div>
            <div className="text-[13px] italic leading-[26.5px] text-[#1d6fa8] whitespace-nowrap"><b className="font-semibold text-[#333]">URL : </b>https://github.com/junglimDT/junglim-dt-notes</div>
            <div className="absolute right-[28px] top-[14px] flex items-center gap-[13px]">
              <span className="w-[16px] h-[16px] rounded-full bg-[#666] text-white text-[12px] font-bold flex items-center justify-center">?</span>
              <span className="flex flex-col gap-[3px]"><span className="w-[3px] h-[3px] bg-[#666]" /><span className="w-[3px] h-[3px] bg-[#666]" /><span className="w-[3px] h-[3px] bg-[#666]" /></span>
            </div>
          </div>
          <div className="h-[34px] mr-[8px] shrink-0 bg-[#f4f4f4] border-y border-[#e2e2e2] flex items-center justify-between pl-[16px] pr-[17px] text-[12px] text-[#444]">
            <span>Inputs</span>
            <svg width="7" height="5" viewBox="0 0 7 5"><path d="M0 5h7L3.500 0z" fill="#777" /></svg>
          </div>
          <div className="mr-[8px] shrink-0">{inputs.map((r, i) => <InputRow key={i} r={r} />)}</div>
          <div className="h-[14px] shrink-0" />
          <div className="h-[5px] shrink-0 bg-[#6a9a2f] border-t border-[#ccc] mr-[2px]" />
          <div className="h-[24px] shrink-0 border-b border-[#ddd] flex items-center pl-[10px] text-[11px] text-[#666] gap-[6px]">
            <Check c="#5d8f2a" s={14} /><span>Run complete</span>
          </div>
          <div className="flex-1 flex items-center pl-[12px] pr-[12px] text-[12px] text-[#777]">
            <span>Unsaved</span>
            <div className="ml-auto mr-[-1px] w-[53px] h-[25px] border border-[#aaa] rounded-[2px] flex items-center justify-center text-[#444]">Back</div>
            <div className="ml-[8px] w-[50px] h-[26px] bg-[#2296d8] rounded-[3px] border border-[#8fcbef] text-white font-semibold flex items-center justify-center">Run</div>
          </div>
          <div className="absolute right-[1px] top-[160px] w-[4px] h-[221px] bg-[#c8c8c8]" />
        </div>
        <div className="flex-1 bg-[#d9d9d9]" />
      </div>
    </div>
  );
}
